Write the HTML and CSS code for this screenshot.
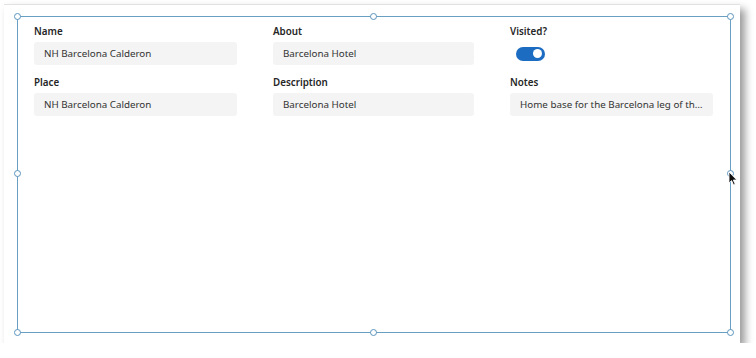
FILE: index.html
```html
<!DOCTYPE html>
<html lang="en">
<head>
  <meta charset="UTF-8" />
  <title>Hotel Form</title>
  <link rel="stylesheet" href="styles.css">
</head>
<body>
  <div class="card">
    <!-- selected form control on the canvas -->
    <div class="frame">
      <span class="handle h-tl"></span>
      <span class="handle h-tc"></span>
      <span class="handle h-tr"></span>
      <span class="handle h-ml"></span>
      <span class="handle h-mr"></span>
      <span class="handle h-bl"></span>
      <span class="handle h-bc"></span>
      <span class="handle h-br"></span>

      <div class="fields">
        <div class="field">
          <div class="label">Name</div>
          <div class="input">NH Barcelona Calderon</div>
        </div>
        <div class="field">
          <div class="label">About</div>
          <div class="input">Barcelona Hotel</div>
        </div>
        <div class="field">
          <div class="label">Visited?</div>
          <div class="toggle-row"><span class="toggle"><span class="knob"></span></span></div>
        </div>
        <div class="field">
          <div class="label">Place</div>
          <div class="input">NH Barcelona Calderon</div>
        </div>
        <div class="field">
          <div class="label">Description</div>
          <div class="input">Barcelona Hotel</div>
        </div>
        <div class="field">
          <div class="label">Notes</div>
          <div class="input">Home base for the Barcelona leg of th…</div>
        </div>
      </div>

      <svg class="cursor" width="10" height="15" viewBox="0 0 10 15">
        <path d="M1 1 L1 12 L3.6 9.6 L5.6 14 L7.2 13.3 L5.3 9 L8.8 9 Z" fill="#111" stroke="#fff" stroke-width="0.8"/>
      </svg>
    </div>
  </div>
</body>
</html>
```

FILE: styles.css
```css
body {
  margin: 0;
  background: #fff;
  font-family: 'Noto Sans', 'Open Sans', sans-serif;
  color: #222;
}

.card {
  margin: 4px 0 0 4px;
  width: 736px;
  height: 339px;
  box-sizing: border-box;
  background: #fff;
  border-top: 1px solid #e2e2e2;
  box-shadow: 5px 5px 8px rgba(0, 0, 0, 0.4);
  padding: 11px 0 0 13px;
}

.frame {
  position: relative;
  width: 714px;
  height: 317px;
  box-sizing: border-box;
  border: 1px solid #6a9fc4;
  padding: 7px 0 0 16px;
}

.handle {
  position: absolute;
  width: 5px;
  height: 5px;
  border: 1px solid #5b93bd;
  border-radius: 50%;
  background: #fff;
}

.h-tl { left: -4px; top: -4px; }
.h-tc { left: 352px; top: -4px; }
.h-tr { right: -4px; top: -4px; }
.h-ml { left: -4px; top: 153px; }
.h-mr { right: -4px; top: 153px; }
.h-bl { left: -4px; bottom: -4px; }
.h-bc { left: 352px; bottom: -4px; }
.h-br { right: -4px; bottom: -4px; }

.fields {
  display: grid;
  grid-template-columns: 203px 201px 203px;
  column-gap: 36px;
  row-gap: 10px;
}

.label {
  font-size: 9.8px;
  font-weight: 600;
  line-height: 16px;
  margin-bottom: 2px;
  color: #262626;
}

.input {
  height: 23px;
  line-height: 23px;
  padding: 0 10px;
  background: #f4f4f4;
  border-radius: 3px;
  font-size: 9.8px;
  color: #333;
  white-space: nowrap;
}

.toggle-row {
  height: 23px;
  display: flex;
  align-items: center;
  padding-left: 6px;
}

.toggle {
  position: relative;
  width: 29px;
  height: 14px;
  border-radius: 7px;
  background: #1c6cc1;
}

.knob {
  position: absolute;
  right: 3px;
  top: 2.5px;
  width: 9px;
  height: 9px;
  border-radius: 50%;
  background: #fff;
}

.cursor {
  position: absolute;
  right: -8px;
  top: 154px;
}
```
